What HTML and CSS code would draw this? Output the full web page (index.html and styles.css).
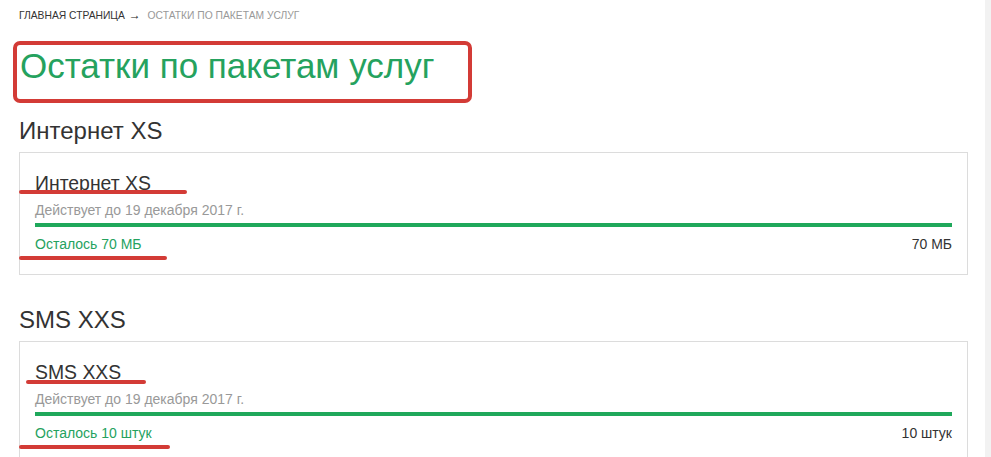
FILE: index.html
```html
<!DOCTYPE html>
<html lang="ru">
<head>
  <meta charset="UTF-8" />
  <title>Остатки по пакетам услуг</title>
  <link rel="stylesheet" href="styles.css">
</head>
<body>
  <div class="page">
    <div class="crumbs">
      <a href="#">Главная страница</a>
      <span class="arrow">&rarr;</span>
      <span class="current">Остатки по пакетам услуг</span>
    </div>

    <div class="title-wrap">
      <h1>Остатки по пакетам услуг</h1>
      <span class="mark-box"></span>
    </div>

    <section class="group">
      <h2>Интернет XS</h2>
      <div class="pack">
        <div class="pack-name">Интернет XS<span class="mark-line name-line"></span></div>
        <div class="pack-date">Действует до 19 декабря 2017 г.</div>
        <div class="bar"><div class="bar-fill" style="width: 100%"></div></div>
        <div class="pack-foot">
          <span class="left">Осталось 70 МБ<span class="mark-line left-line"></span></span>
          <span class="total">70 МБ</span>
        </div>
      </div>
    </section>

    <section class="group">
      <h2>SMS XXS</h2>
      <div class="pack">
        <div class="pack-name">SMS XXS<span class="mark-line name-line-short"></span></div>
        <div class="pack-date">Действует до 19 декабря 2017 г.</div>
        <div class="bar"><div class="bar-fill" style="width: 100%"></div></div>
        <div class="pack-foot">
          <span class="left">Осталось 10 штук<span class="mark-line left-line-long"></span></span>
          <span class="total">10 штук</span>
        </div>
      </div>
    </section>
  </div>
</body>
</html>
```

FILE: styles.css
```css
body {
  font-family: 'Liberation Sans', Arial, sans-serif;
  margin: 0;
  padding: 0;
  background: #fff;
  color: #333;
  border-right: 6px solid #f2f2f2;
  height: 100vh;
  box-sizing: border-box;
  overflow: hidden;
}

.page {
  padding: 9px 17px 0 19px;
}

.crumbs {
  font-size: 10.3px;
  text-transform: uppercase;
  line-height: 12px;
  color: #999;
}

.crumbs a {
  color: #333;
  text-decoration: none;
}

.crumbs .arrow {
  color: #222;
  font-size: 12px;
  font-weight: bold;
  margin: 0 4px 0 1px;
}

.title-wrap {
  position: relative;
  margin-top: 21px;
  padding: 0 0 0 1px;
}

h1 {
  margin: 0;
  font-size: 35px;
  font-weight: normal;
  color: #25a25e;
  line-height: 45px;
  padding: 0 0 28px;
}

.mark-box {
  position: absolute;
  left: -6px;
  top: -2px;
  width: 451px;
  height: 54px;
  border: 4px solid #d33b36;
  border-radius: 7px;
}

.group {
  margin-bottom: 30px;
}

.group h2 {
  margin: 0;
  font-size: 24px;
  font-weight: normal;
  line-height: 30px;
  color: #333;
}

.pack {
  margin-top: 6px;
  border: 1px solid #dcdcdc;
  padding: 19px 15px 22px;
}

.pack-name {
  position: relative;
  display: inline-block;
  font-size: 19.4px;
  line-height: 22px;
  color: #333;
}

.pack-date {
  margin-top: 8px;
  font-size: 14px;
  line-height: 16px;
  color: #999;
}

.bar {
  margin-top: 5px;
  height: 4px;
  background: #eee;
}

.bar-fill {
  height: 100%;
  background: #1fa85b;
}

.pack-foot {
  display: flex;
  justify-content: space-between;
  margin-top: 9px;
  font-size: 14px;
  line-height: 16px;
}

.pack-foot .left {
  position: relative;
  color: #25a25e;
}

.pack-foot .total {
  color: #333;
}

.mark-line {
  position: absolute;
  height: 4px;
  border-radius: 2px;
  background: #d33b36;
}

.name-line {
  left: -16px;
  width: 168px;
  bottom: 0;
}

.name-line-short {
  left: -9px;
  width: 120px;
  bottom: -1px;
}

.left-line {
  left: -16px;
  width: 148px;
  bottom: -8px;
}

.left-line-long {
  left: -16px;
  width: 151px;
  bottom: -8px;
}
```
